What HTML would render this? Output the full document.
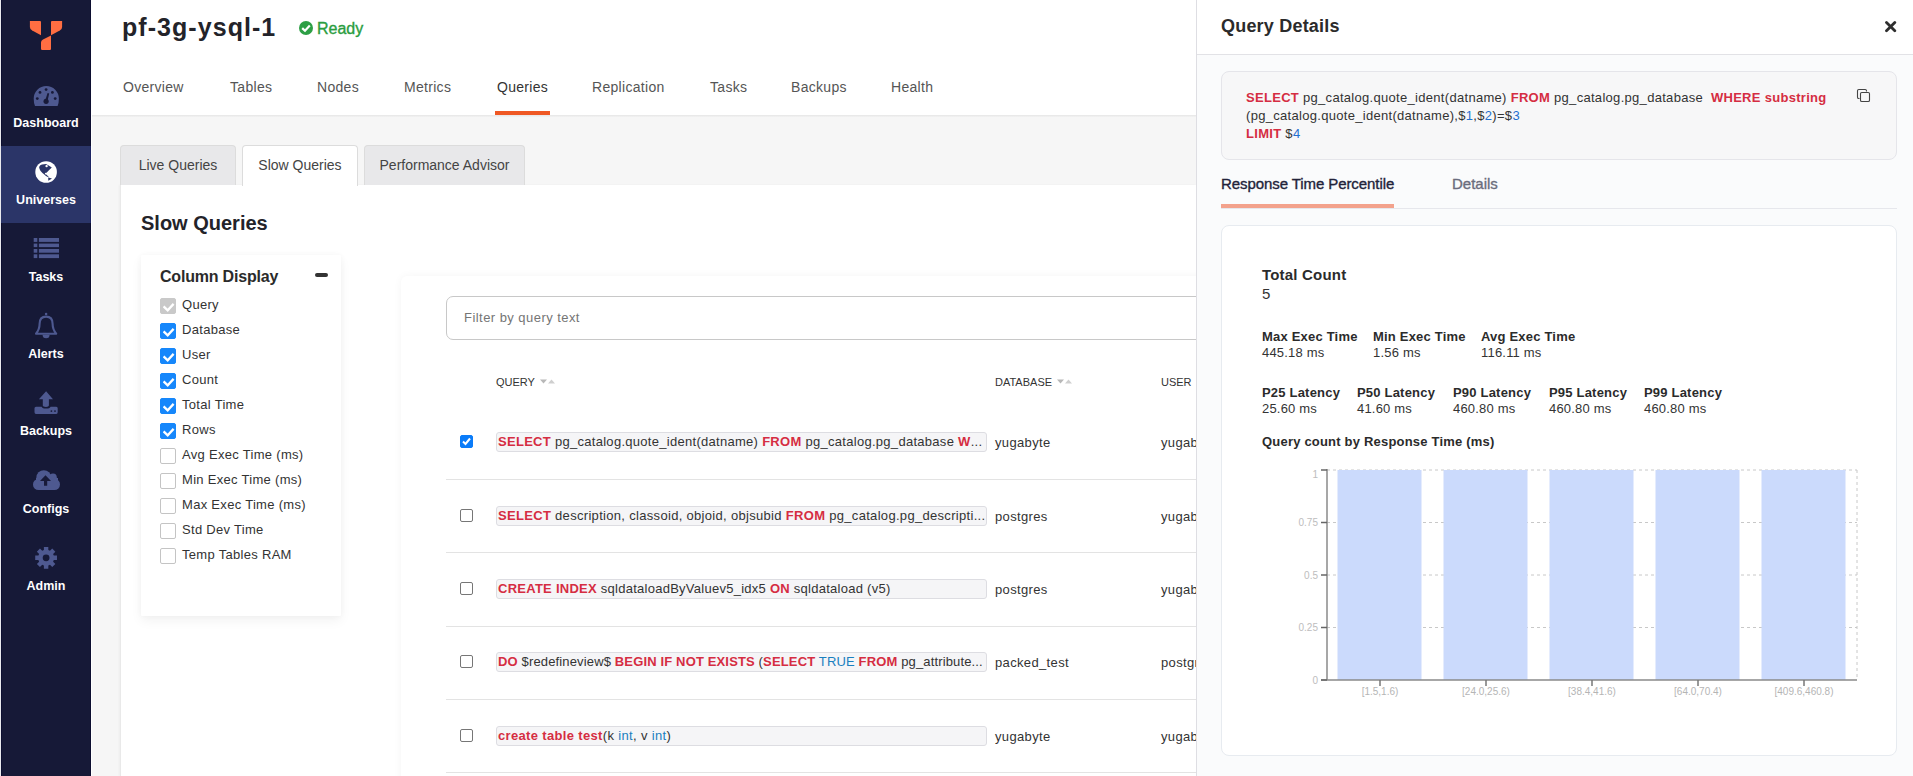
<!DOCTYPE html>
<html><head><meta charset="utf-8">
<style>
*{box-sizing:border-box;margin:0;padding:0}
html,body{width:1913px;height:776px;overflow:hidden;background:#fff;font-family:"Liberation Sans",sans-serif;color:#333}
.abs{position:absolute}
#sb{position:absolute;left:0;top:0;width:91px;height:776px;background:#161937;border-left:1px solid #e9e9ee}
#sb:before{content:"";position:absolute;left:0;top:0;width:1px;height:776px;background:#0c0e30}
#sb:after{content:"";position:absolute;right:0;top:0;width:1px;height:776px;background:#0c0e30}
.sbi{position:absolute;left:0;width:90px;height:77px;text-align:center}
.sbi.act{background:linear-gradient(to right,#2b3568 89px,#1d2562 89px);z-index:2}
.sbi svg{position:absolute;left:50%;transform:translateX(-50%)}
.sbl{position:absolute;left:0;width:90px;text-align:center;color:#fff;font-weight:bold;font-size:12.5px;line-height:14px;z-index:3}
#hdr{position:absolute;left:91px;top:0;width:1105px;height:115px;background:#fff}
#content{position:absolute;left:92px;top:115px;width:1104px;height:661px;background:#f6f6f6}
#content:before{content:"";position:absolute;left:0;top:0;right:0;height:2px;background:linear-gradient(#e6e6e6,#f3f3f3)}
.nav{position:absolute;top:78px;font-size:14px;color:#555;line-height:18px;white-space:nowrap;letter-spacing:0.3px}
.stab{position:absolute;top:145px;height:40px;background:#e8e8ea;border:1px solid #dcdcdc;border-bottom:none;border-radius:4px 4px 0 0;font-size:14px;color:#444;text-align:center;line-height:38px;white-space:nowrap}
.stab.act{background:#fff;height:41px}
#panel{position:absolute;left:120px;top:185px;width:1076px;height:591px;background:#fff;border-left:1px solid #e9e9e9;box-shadow:-1px 0 2px rgba(0,0,0,0.04)}
#drawer{position:absolute;left:1196px;top:0;width:717px;height:776px;background:#fafbfc;border-left:1px solid #dedee3}

.cd{position:absolute;left:141px;top:255px;width:200px;height:361px;background:#fff;border-radius:1px;box-shadow:0 0 6px rgba(0,0,0,0.035),0 5px 12px rgba(0,0,0,0.05)}
.cbi{position:absolute;left:19px;height:16px;font-size:13px;color:#333;line-height:16px;white-space:nowrap}
.cbi i{position:absolute;left:0;top:0;width:16px;height:16px;border-radius:2px;border:1px solid #c4c4c4;background:#fff}
.cbi.on i{background:#1687fb;border-color:#1687fb}
.cbi.dis i{background:#c9c9c9;border-color:#c9c9c9}
.cbi i svg{position:absolute;left:2px;top:3px}
.cbi span{position:absolute;left:22px;top:-1px;letter-spacing:0.3px}
.tc{position:absolute;left:401px;top:276px;width:900px;height:520px;background:#fff;border-radius:6px;box-shadow:0 0 8px rgba(0,0,0,0.045)}
.flt{position:absolute;left:446px;top:296px;width:800px;height:44px;border:1px solid #c8c8c8;border-radius:7px;background:#fff}
.flt span{position:absolute;left:17px;top:13px;font-size:13px;color:#757575;line-height:16px;letter-spacing:0.45px;white-space:nowrap}
.th{position:absolute;top:376px;font-size:11px;color:#333;line-height:12px;white-space:nowrap}
.sep{position:absolute;left:446px;width:760px;height:1px;background:#e3e3e3}
.rcb{position:absolute;left:460px;width:13px;height:13px;border:1px solid #767676;border-radius:2px;background:#fff}
.rcb.on{background:#0b7cf9;border-color:#0b7cf9}
.code{position:absolute;left:496px;width:491px;height:20px;border:1px solid #dddde2;border-radius:3px;background:#f5f5f7;font-size:13px;line-height:18px;color:#333;white-space:nowrap;overflow:hidden;padding-left:1px;letter-spacing:0.25px}
.kw{color:#d52d42;font-weight:bold}
.nm{color:#1a7fbf}
.td{position:absolute;font-size:13px;color:#333;line-height:16px;white-space:nowrap;letter-spacing:0.35px}

#dh{position:absolute;left:0;top:0;width:716px;height:55px;background:#fff;border-bottom:1px solid #e2e2e6}
.cbox{position:absolute;left:24px;top:71px;width:676px;height:89px;background:#f7f7f8;border:1px solid #e5e5ea;border-radius:8px}
.cl{position:absolute;left:49px;font-size:13px;line-height:16px;color:#333;white-space:nowrap;letter-spacing:0.3px}
.bl{color:#1f6fd0}
.st{position:absolute;font-size:13px;line-height:16px;color:#333;white-space:nowrap;letter-spacing:0.2px}
.st b{display:block;color:#2b2b2b}
</style></head><body>

<div id="hdr">
<div class="abs" style="left:31px;top:12px;font-size:25px;font-weight:bold;color:#232329;line-height:30px;white-space:nowrap;letter-spacing:1.05px">pf-3g-ysql-1</div>
<svg class="abs" style="left:208px;top:21px" width="14" height="14" viewBox="0 0 14 14"><circle cx="7" cy="7" r="7" fill="#2d9f45"/><path d="M3.2,7.1 L6,9.8 L10.8,4.6" fill="none" stroke="#fff" stroke-width="2.2"/></svg>
<div class="abs" style="left:226px;top:19px;font-size:16px;color:#2a9d40;line-height:20px;white-space:nowrap;-webkit-text-stroke:0.35px #2a9d40">Ready</div>
<div class="nav" style="left:32px">Overview</div>
<div class="nav" style="left:139px">Tables</div>
<div class="nav" style="left:226px">Nodes</div>
<div class="nav" style="left:313px">Metrics</div>
<div class="nav" style="left:406px;color:#333">Queries</div>
<div class="abs" style="left:404px;top:111px;width:55px;height:4px;background:#ef5824"></div>
<div class="nav" style="left:501px">Replication</div>
<div class="nav" style="left:619px">Tasks</div>
<div class="nav" style="left:700px">Backups</div>
<div class="nav" style="left:800px">Health</div>
</div>
<div id="content"></div>

<div id="sb">
<div class="sbi act" style="top:146px"></div>
<svg class="abs" style="left:-1px;top:0;z-index:3" width="91" height="776" viewBox="0 0 91 776">
<g fill="#ff6e42" transform="translate(26,16)">
<path d="M3.9,4.9 H14 Q15,4.9 15,6 V19.2 L6.2,14.6 Q3.9,13.3 3.9,11 Z"/>
<path d="M26,4.9 H36.1 V11 Q36.1,13.3 33.8,14.6 L25,19.3 V6 Q25,4.9 26,4.9 Z"/>
<path d="M25,19.5 V33 Q25,34 24,34 H16.2 Q15,34 15,32.8 V26.6 Q15,24.6 17,23.6 Z"/>
</g>
<g fill="#4e5990">
<path d="M33.7,98.6 A12.6,12.6 0 0 1 58.9,98.6 Q58.9,103 57.6,106 H35 Q33.7,103 33.7,98.6 Z"/>
</g>
<g fill="#181a39">
<circle cx="46.1" cy="89.6" r="1.4"/><circle cx="40" cy="92.4" r="1.4"/><circle cx="52.4" cy="92.4" r="1.4"/>
<circle cx="37.3" cy="98.6" r="1.4"/><circle cx="55.2" cy="98.6" r="1.4"/>
<circle cx="46.1" cy="101.3" r="2.6"/><path d="M45,101 L47.6,93 L49.2,93.4 L47.4,101.6 Z"/>
</g>
<circle cx="46.1" cy="172" r="10.8" fill="#fff"/>
<path fill="#2b3568" transform="translate(26,155)" d="M13.1,12.1 Q14,9.8 16,9.5 L20,9 Q22.5,10.5 25.8,12.4 L23.2,15 L21,17.2 L19.8,18.3 Q19.8,19.6 21.6,20.8 L23,22.2 L21.2,21.8 Q19.5,20.8 18.3,19.6 Q16.3,18.2 14.4,15.8 Q13.4,14 13.1,12.1 Z M22.2,22.5 L26,23.4 L22.3,25.7 Z"/><circle cx="46.6" cy="166.1" r="1.2" fill="#fff"/><circle cx="45.8" cy="173.6" r="0.9" fill="#fff"/>
<g fill="#4e5990">
<rect x="33.7" y="238" width="3.6" height="3.9"/><rect x="38.9" y="238" width="20.1" height="3.9"/>
<rect x="33.7" y="243.6" width="3.6" height="3.5"/><rect x="38.9" y="243.6" width="20.1" height="3.5"/>
<rect x="33.7" y="249" width="3.6" height="3.7"/><rect x="38.9" y="249" width="20.1" height="3.7"/>
<rect x="33.7" y="254.3" width="3.6" height="3.8"/><rect x="38.9" y="254.3" width="20.1" height="3.8"/>
</g>
<g fill="none" stroke="#4e5990" stroke-width="2.1" stroke-linejoin="round">
<path d="M36,333.7 Q39.6,329.5 39.6,323.8 Q39.6,316.6 46.1,316.6 Q52.6,316.6 52.6,323.8 Q52.6,329.5 56.2,333.7 Z"/>
</g>
<g fill="#4e5990">
<circle cx="46.1" cy="314" r="1.3"/>
<path d="M42.6,334.8 A3.5,3.5 0 0 0 49.6,334.8 Z"/>
<path d="M46.1,391.2 L53,399.2 H48.9 V405.6 Q48.9,406.9 46,406.9 Q42.8,406.9 42.8,405.6 V399.2 H38.9 Z"/>
<path d="M34.5,408.3 Q34.5,406.7 36,406.7 H41.6 Q42.3,408.6 46,408.6 Q49.8,408.6 50.6,406.7 H56.3 Q57.7,406.7 57.7,408.3 V412.3 Q57.7,413.9 56.3,413.9 H36 Q34.5,413.9 34.5,412.3 Z"/>
</g>
<circle cx="51.4" cy="411.1" r="0.9" fill="#181a39"/><circle cx="55" cy="411.1" r="0.9" fill="#181a39"/>
<g fill="#4e5990">
<circle cx="43.8" cy="477.6" r="7.4"/><circle cx="53" cy="477.2" r="3.8"/>
<rect x="33" y="479" width="27" height="11" rx="5.5"/>
<rect x="36" y="478" width="22" height="8"/>
</g>
<path fill="#181a39" d="M45.5,475.2 L51,481 H47.2 V485.8 H44 V481 H40 Z"/>
<path fill="#4e5990" fill-rule="evenodd" d="M43.89,550.11 L43.89,546.92 L48.31,546.92 L48.31,550.11 L49.97,550.80 L52.23,548.55 L55.35,551.67 L53.10,553.93 L53.79,555.59 L56.98,555.59 L56.98,560.01 L53.79,560.01 L53.10,561.67 L55.35,563.93 L52.23,567.05 L49.97,564.80 L48.31,565.49 L48.31,568.68 L43.89,568.68 L43.89,565.49 L42.23,564.80 L39.97,567.05 L36.85,563.93 L39.10,561.67 L38.41,560.01 L35.22,560.01 L35.22,555.59 L38.41,555.59 L39.10,553.93 L36.85,551.67 L39.97,548.55 L42.23,550.80Z M46.1,554.4 A3.4,3.4 0 1 0 46.1,561.2 A3.4,3.4 0 1 0 46.1,554.4 Z"/>
</svg>
<div class="sbl" style="top:116px">Dashboard</div>
<div class="sbl" style="top:193px">Universes</div>
<div class="sbl" style="top:270px">Tasks</div>
<div class="sbl" style="top:347px">Alerts</div>
<div class="sbl" style="top:424px">Backups</div>
<div class="sbl" style="top:502px">Configs</div>
<div class="sbl" style="top:579px">Admin</div>
</div>


<div id="panel">
<div class="abs" style="left:20px;top:26px;font-size:20px;font-weight:bold;color:#232329;line-height:24px;white-space:nowrap">Slow Queries</div>
</div>
<div class="cd">
<div class="abs" style="left:19px;top:12px;font-size:16px;font-weight:bold;color:#2b2b2b;line-height:20px;white-space:nowrap;letter-spacing:-0.2px">Column Display</div>
<div class="abs" style="left:174px;top:18px;width:13px;height:4px;border-radius:2px;background:#333"></div>
<div class="cbi dis" style="top:43px"><i><svg width="12" height="10" viewBox="0 0 12 10"><path d="M0.6,4.4 L4.7,8.3 L10.6,1.9" fill="none" stroke="#fff" stroke-width="2.3"/></svg></i><span>Query</span></div>
<div class="cbi on" style="top:68px"><i><svg width="12" height="10" viewBox="0 0 12 10"><path d="M0.6,4.4 L4.7,8.3 L10.6,1.9" fill="none" stroke="#fff" stroke-width="2.3"/></svg></i><span>Database</span></div>
<div class="cbi on" style="top:93px"><i><svg width="12" height="10" viewBox="0 0 12 10"><path d="M0.6,4.4 L4.7,8.3 L10.6,1.9" fill="none" stroke="#fff" stroke-width="2.3"/></svg></i><span>User</span></div>
<div class="cbi on" style="top:118px"><i><svg width="12" height="10" viewBox="0 0 12 10"><path d="M0.6,4.4 L4.7,8.3 L10.6,1.9" fill="none" stroke="#fff" stroke-width="2.3"/></svg></i><span>Count</span></div>
<div class="cbi on" style="top:143px"><i><svg width="12" height="10" viewBox="0 0 12 10"><path d="M0.6,4.4 L4.7,8.3 L10.6,1.9" fill="none" stroke="#fff" stroke-width="2.3"/></svg></i><span>Total Time</span></div>
<div class="cbi on" style="top:168px"><i><svg width="12" height="10" viewBox="0 0 12 10"><path d="M0.6,4.4 L4.7,8.3 L10.6,1.9" fill="none" stroke="#fff" stroke-width="2.3"/></svg></i><span>Rows</span></div>
<div class="cbi " style="top:193px"><i></i><span>Avg Exec Time (ms)</span></div>
<div class="cbi " style="top:218px"><i></i><span>Min Exec Time (ms)</span></div>
<div class="cbi " style="top:243px"><i></i><span>Max Exec Time (ms)</span></div>
<div class="cbi " style="top:268px"><i></i><span>Std Dev Time</span></div>
<div class="cbi " style="top:293px"><i></i><span>Temp Tables RAM</span></div>
</div>
<div class="tc"></div>
<div class="flt"><span>Filter by query text</span></div>
<div class="th" style="left:496px">QUERY <svg width="16" height="6" viewBox="0 0 16 6" style="margin-left:2px;vertical-align:1px"><path d="M0,0.5 H7 L3.5,4.5 Z" fill="#b8b8b8"/><path d="M8,4.5 H15 L11.5,0.5 Z" fill="#cfcfcf"/></svg></div>
<div class="th" style="left:995px">DATABASE <svg width="16" height="6" viewBox="0 0 16 6" style="margin-left:2px;vertical-align:1px"><path d="M0,0.5 H7 L3.5,4.5 Z" fill="#b8b8b8"/><path d="M8,4.5 H15 L11.5,0.5 Z" fill="#cfcfcf"/></svg></div>
<div class="th" style="left:1161px">USER <svg width="16" height="6" viewBox="0 0 16 6" style="margin-left:2px;vertical-align:1px"><path d="M0,0.5 H7 L3.5,4.5 Z" fill="#b8b8b8"/><path d="M8,4.5 H15 L11.5,0.5 Z" fill="#cfcfcf"/></svg></div>
<div class="rcb on" style="top:435px"><svg width='11' height='11' viewBox='0 0 11 11' style='position:absolute;left:0;top:0'><path d='M2,5.5 L4.5,8 L9,2.5' fill='none' stroke='#fff' stroke-width='2'/></svg></div>
<div class="code" style="top:432px;letter-spacing:0.287px"><span class="kw">SELECT</span> pg_catalog.quote_ident(datname) <span class="kw">FROM</span> pg_catalog.pg_database <span class="kw">W</span>...</div>
<div class="td" style="left:995px;top:435px">yugabyte</div>
<div class="td" style="left:1161px;top:435px">yugabyte</div>
<div class="rcb " style="top:509px"></div>
<div class="code" style="top:506px;letter-spacing:0.311px"><span class="kw">SELECT</span> description, classoid, objoid, objsubid <span class="kw">FROM</span> pg_catalog.pg_descripti...</div>
<div class="td" style="left:995px;top:509px">postgres</div>
<div class="td" style="left:1161px;top:509px">yugabyte</div>
<div class="rcb " style="top:582px"></div>
<div class="code" style="top:579px;letter-spacing:0.259px"><span class="kw">CREATE INDEX</span> sqldataloadByValuev5_idx5 <span class="kw">ON</span> sqldataload (v5)</div>
<div class="td" style="left:995px;top:582px">postgres</div>
<div class="td" style="left:1161px;top:582px">yugabyte</div>
<div class="rcb " style="top:655px"></div>
<div class="code" style="top:652px;letter-spacing:0.147px"><span class="kw">DO</span> $redefineview$ <span class="kw">BEGIN IF NOT EXISTS</span> (<span class="kw">SELECT</span> <span class="nm">TRUE</span> <span class="kw">FROM</span> pg_attribute...</div>
<div class="td" style="left:995px;top:655px">packed_test</div>
<div class="td" style="left:1161px;top:655px">postgres</div>
<div class="rcb " style="top:729px"></div>
<div class="code" style="top:726px;letter-spacing:0.34px"><span class="kw">create table test</span>(k <span class="nm">int</span>, v <span class="nm">int</span>)</div>
<div class="td" style="left:995px;top:729px">yugabyte</div>
<div class="td" style="left:1161px;top:729px">yugabyte</div>
<div class="sep" style="top:479px"></div>
<div class="sep" style="top:552px"></div>
<div class="sep" style="top:626px"></div>
<div class="sep" style="top:699px"></div>
<div class="sep" style="top:772px"></div>

<div class="stab" style="left:120px;width:116px">Live Queries</div>
<div class="stab act" style="left:242px;width:116px">Slow Queries</div>
<div class="stab" style="left:364px;width:161px">Performance Advisor</div>

<div id="drawer">
<div id="dh">
<div class="abs" style="left:24px;top:15px;font-size:18px;font-weight:bold;color:#2b2b2b;line-height:22px;white-space:nowrap;letter-spacing:0.2px">Query Details</div>
<svg class="abs" style="left:688px;top:21px" width="12" height="12" viewBox="0 0 12 12"><path d="M1.5,1.5 L9.8,9.8 M9.8,1.5 L1.5,9.8" stroke="#2e2e2e" stroke-width="2.8" stroke-linecap="round"/></svg>
</div>
<div class="cbox"></div>
<div class="cl" style="top:90px"><span class="kw">SELECT</span> pg_catalog.quote_ident(datname) <span class="kw">FROM</span> pg_catalog.pg_database&nbsp; <span class="kw">WHERE substring</span></div>
<div class="cl" style="top:108px">(pg_catalog.quote_ident(datname),$<span class="bl">1</span>,$<span class="bl">2</span>)=$<span class="bl">3</span></div>
<div class="cl" style="top:126px"><span class="kw">LIMIT</span> $<span class="bl">4</span></div>
<svg class="abs" style="left:659px;top:88px" width="15" height="15" viewBox="0 0 15 15"><path d="M3.5,10.5 H2.8 Q1.5,10.5 1.5,9.2 V2.8 Q1.5,1.5 2.8,1.5 H9.2 Q10.5,1.5 10.5,2.8 V3.5" fill="none" stroke="#444" stroke-width="1.1"/><rect x="4.5" y="4.5" width="9" height="9" rx="1.3" fill="none" stroke="#444" stroke-width="1.1"/></svg>
<div class="abs" style="left:24px;top:175px;font-size:15px;color:#22233a;line-height:17px;white-space:nowrap;letter-spacing:-0.08px;-webkit-text-stroke:0.35px #22233a">Response Time Percentile</div>
<div class="abs" style="left:255px;top:175px;font-size:15px;color:#6a6d7d;line-height:17px;white-space:nowrap;-webkit-text-stroke:0.35px #6a6d7d">Details</div>
<div class="abs" style="left:24px;top:208px;width:676px;height:1px;background:#e6e7ec"></div>
<div class="abs" style="left:24px;top:204px;width:173px;height:4px;background:#f3a28c"></div>
<div class="abs" style="left:24px;top:225px;width:676px;height:531px;background:#fff;border:1px solid #e7ebf0;border-radius:8px"></div>
<div class="abs" style="left:65px;top:266px;font-size:15px;font-weight:bold;color:#2b2b2b;line-height:17px;white-space:nowrap;letter-spacing:0.2px">Total Count</div>
<div class="abs" style="left:65px;top:285px;font-size:15px;color:#333;line-height:17px">5</div>
<div class="st" style="left:65px;top:329px"><b>Max Exec Time</b>445.18 ms</div>
<div class="st" style="left:176px;top:329px"><b>Min Exec Time</b>1.56 ms</div>
<div class="st" style="left:284px;top:329px"><b>Avg Exec Time</b>116.11 ms</div>
<div class="st" style="left:65px;top:385px"><b>P25 Latency</b>25.60 ms</div>
<div class="st" style="left:160px;top:385px"><b>P50 Latency</b>41.60 ms</div>
<div class="st" style="left:256px;top:385px"><b>P90 Latency</b>460.80 ms</div>
<div class="st" style="left:352px;top:385px"><b>P95 Latency</b>460.80 ms</div>
<div class="st" style="left:447px;top:385px"><b>P99 Latency</b>460.80 ms</div>
<div class="st" style="left:65px;top:434px;font-weight:bold;color:#2b2b2b">Query count by Response Time (ms)</div>
</div>
<svg class="abs" style="left:0;top:0;pointer-events:none" width="1913" height="776" viewBox="0 0 1913 776">
<path d="M1327,470 H1857" stroke="#c8c8c8" stroke-width="1" stroke-dasharray="3,3"/><path d="M1327,522.5 H1857" stroke="#c8c8c8" stroke-width="1" stroke-dasharray="3,3"/><path d="M1327,575 H1857" stroke="#c8c8c8" stroke-width="1" stroke-dasharray="3,3"/><path d="M1327,627.5 H1857" stroke="#c8c8c8" stroke-width="1" stroke-dasharray="3,3"/><path d="M1857,470 V680" stroke="#c8c8c8" stroke-width="1" stroke-dasharray="3,3"/>
<rect x="1337.5" y="470" width="84" height="210" fill="#cbdafc"/><rect x="1443.5" y="470" width="84" height="210" fill="#cbdafc"/><rect x="1549.5" y="470" width="84" height="210" fill="#cbdafc"/><rect x="1655.5" y="470" width="84" height="210" fill="#cbdafc"/><rect x="1761.5" y="470" width="84" height="210" fill="#cbdafc"/>
<path d="M1327,469 V680" stroke="#8a8a8a" stroke-width="1.5"/><path d="M1321,680 H1857" stroke="#8a8a8a" stroke-width="1.5"/>
<path d="M1321,470 H1327" stroke="#666" stroke-width="1.5"/><path d="M1321,522.5 H1327" stroke="#666" stroke-width="1.5"/><path d="M1321,575 H1327" stroke="#666" stroke-width="1.5"/><path d="M1321,627.5 H1327" stroke="#666" stroke-width="1.5"/><path d="M1321,680 H1327" stroke="#666" stroke-width="1.5"/><path d="M1380,680 V686" stroke="#777" stroke-width="1.5"/><path d="M1486,680 V686" stroke="#777" stroke-width="1.5"/><path d="M1592,680 V686" stroke="#777" stroke-width="1.5"/><path d="M1698,680 V686" stroke="#777" stroke-width="1.5"/><path d="M1804,680 V686" stroke="#777" stroke-width="1.5"/>
<g font-family="Liberation Sans" font-size="9" fill="#b5b5b5"><text x="1380" y="695" text-anchor="middle" font-size="10">[1.5,1.6)</text><text x="1486" y="695" text-anchor="middle" font-size="10">[24.0,25.6)</text><text x="1592" y="695" text-anchor="middle" font-size="10">[38.4,41.6)</text><text x="1698" y="695" text-anchor="middle" font-size="10">[64.0,70.4)</text><text x="1804" y="695" text-anchor="middle" font-size="10">[409.6,460.8)</text><text x="1318" y="477.5" text-anchor="end" font-size="10" fill="#bdbdbd">1</text><text x="1318" y="526.0" text-anchor="end" font-size="10" fill="#bdbdbd">0.75</text><text x="1318" y="578.5" text-anchor="end" font-size="10" fill="#bdbdbd">0.5</text><text x="1318" y="631.0" text-anchor="end" font-size="10" fill="#bdbdbd">0.25</text><text x="1318" y="683.5" text-anchor="end" font-size="10" fill="#bdbdbd">0</text></g>
</svg>

</body></html>
